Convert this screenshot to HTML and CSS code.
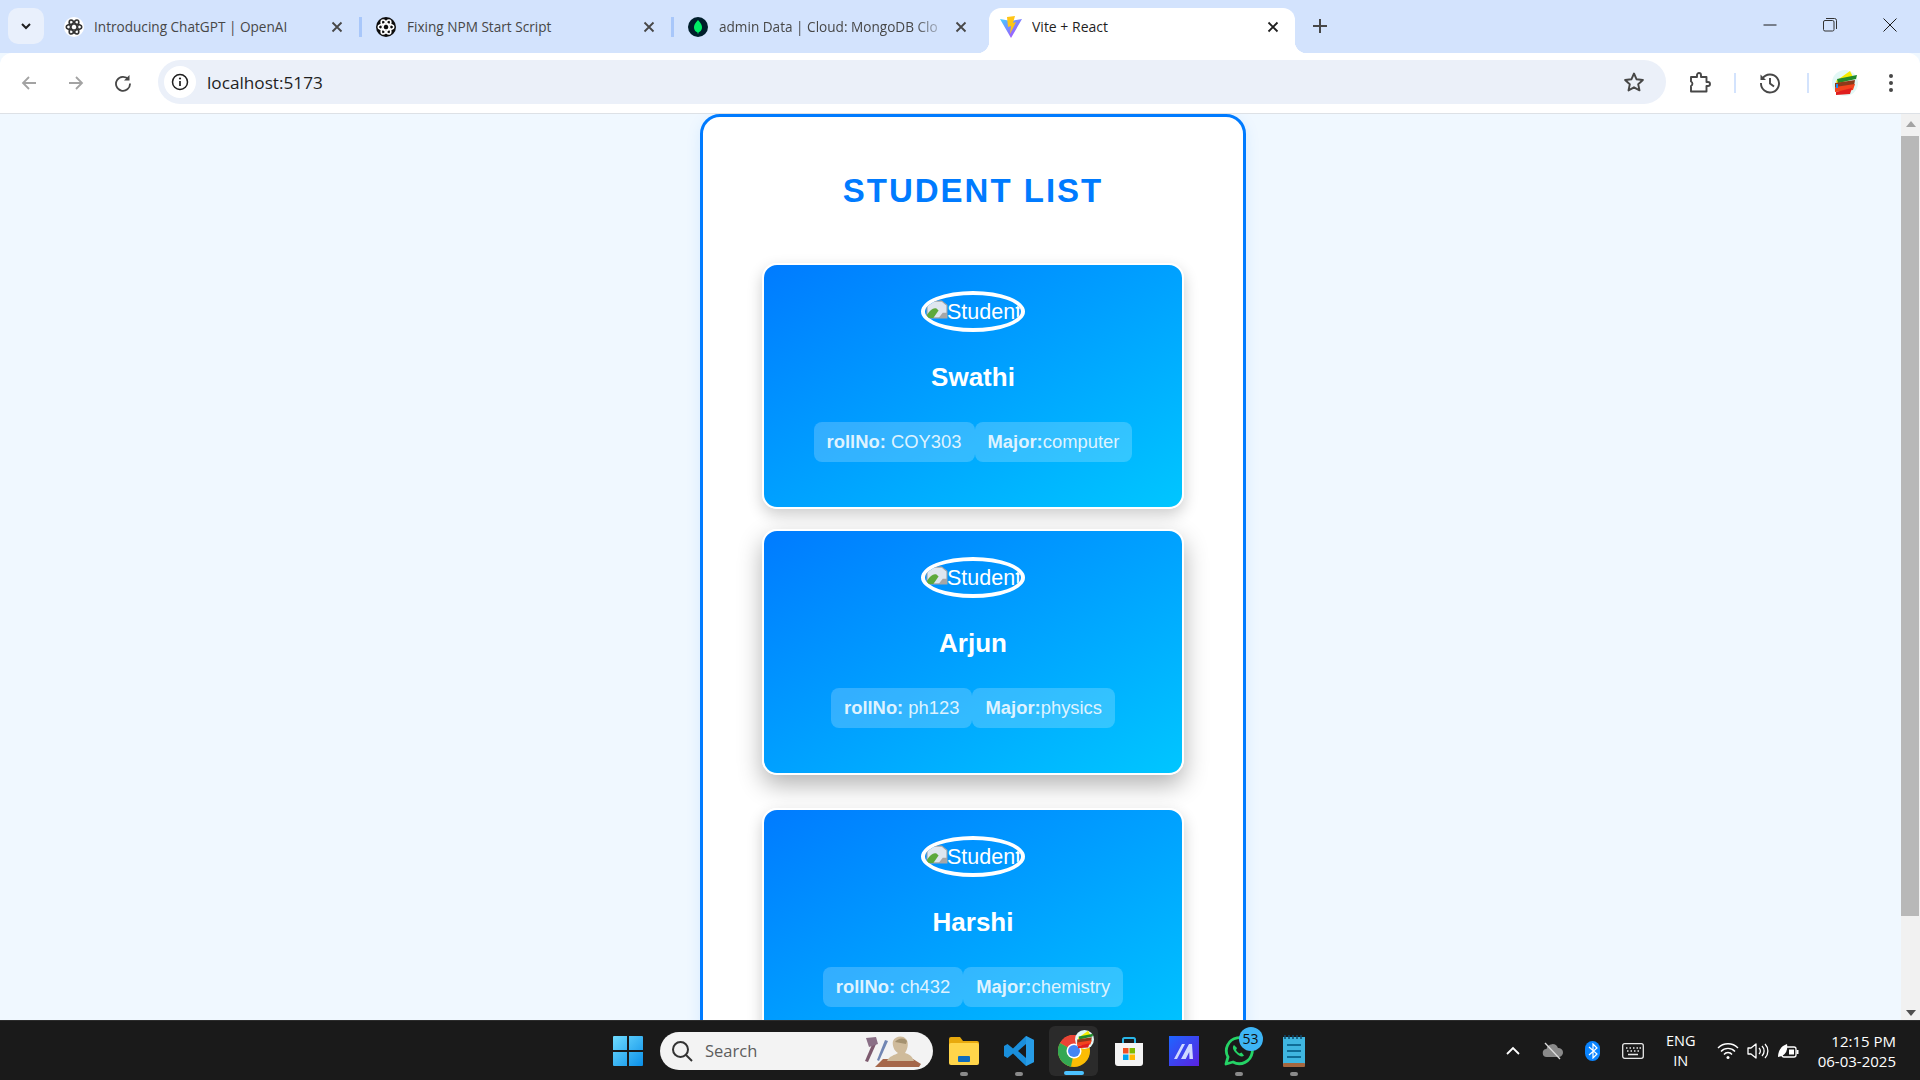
FILE: index.html
```html
<!DOCTYPE html>
<html lang="en">
<head>
    <meta charset="UTF-8">
    <meta name="viewport" content="width=device-width, initial-scale=1.0">
    <title>Vite + React</title>
    <link rel="stylesheet" href="styles.css">
</head>
<body>
    <div class="tabstrip">
        <div class="tab-menu">
            <svg width="14" height="14" viewBox="0 0 14 14"><path d="M3 5l4 4 4-4" fill="none" stroke="#1f1f1f" stroke-width="2"/></svg>
        </div>
        <div class="tab has-sep">
            <svg class="favicon" viewBox="0 0 20 20"><circle cx="10" cy="10" r="10" fill="#fff"/><g fill="none" stroke="#333" stroke-width="1.500"><ellipse cx="10" cy="10" rx="7.800" ry="3"/><ellipse cx="10" cy="10" rx="7.800" ry="3" transform="rotate(60 10 10)"/><ellipse cx="10" cy="10" rx="7.800" ry="3" transform="rotate(120 10 10)"/></g></svg>
            <span class="tab-title">Introducing ChatGPT | OpenAI</span>
            <svg class="tab-close" viewBox="0 0 12 12"><path d="M1.500 1.500l9 9M10.500 1.500l-9 9" stroke="#474747" stroke-width="1.800"/></svg>
        </div>
        <div class="tab has-sep">
            <svg class="favicon" viewBox="0 0 20 20"><circle cx="10" cy="10" r="10" fill="#0d0d0d"/><g fill="none" stroke="#fff" stroke-width="1.500"><ellipse cx="10" cy="10" rx="7.800" ry="3"/><ellipse cx="10" cy="10" rx="7.800" ry="3" transform="rotate(60 10 10)"/><ellipse cx="10" cy="10" rx="7.800" ry="3" transform="rotate(120 10 10)"/></g></svg>
            <span class="tab-title">Fixing NPM Start Script</span>
            <svg class="tab-close" viewBox="0 0 12 12"><path d="M1.500 1.500l9 9M10.500 1.500l-9 9" stroke="#474747" stroke-width="1.800"/></svg>
        </div>
        <div class="tab">
            <svg class="favicon" viewBox="0 0 20 20"><circle cx="10" cy="10" r="10" fill="#001e2b"/><path d="M10 3c3 3 4.200 5.500 4 8-.2 2.400-2 3.800-3.500 4.500L10 17.500l-.5-2C8 14.800 6.200 13.400 6 11c-.2-2.500 1-5 4-8z" fill="#00ed64"/></svg>
            <span class="tab-title tab-title-fade">admin Data | Cloud: MongoDB Clo</span>
            <svg class="tab-close" viewBox="0 0 12 12"><path d="M1.500 1.500l9 9M10.500 1.500l-9 9" stroke="#474747" stroke-width="1.800"/></svg>
        </div>
        <div class="tab active">
            <svg class="favicon" viewBox="0 0 22 22"><path d="M0 3l11 19L22 3l-6 1-5 1z" fill="url(#viteFill)"/><path d="M7 1l8-1-2 7 3-1-6 12 1-8-3 1z" fill="#ffc517"/><defs><linearGradient id="viteFill" x1="0" y1="0" x2="1" y2="1"><stop offset="0" stop-color="#41d1ff"/><stop offset="1" stop-color="#bd34fe"/></linearGradient></defs></svg>
            <span class="tab-title">Vite + React</span>
            <svg class="tab-close" viewBox="0 0 12 12"><path d="M1.500 1.500l9 9M10.500 1.500l-9 9" stroke="#1f1f1f" stroke-width="1.800"/></svg>
        </div>
        <div class="new-tab">
            <svg width="16" height="16" viewBox="0 0 16 16"><path d="M8 1v14M1 8h14" stroke="#474747" stroke-width="2"/></svg>
        </div>
        <div class="window-controls">
            <div class="win-btn"><svg width="14" height="14" viewBox="0 0 14 14"><path d="M0.500 7h13" stroke="#1a1a1a" stroke-width="1"/></svg></div>
            <div class="win-btn"><svg width="14" height="14" viewBox="0 0 14 14"><rect x="0.500" y="2.500" width="10.500" height="10.500" rx="1.500" fill="none" stroke="#333" stroke-width="1"/><path d="M3 .5h8.500a2 2 0 0 1 2 2V11" fill="none" stroke="#333" stroke-width="1"/></svg></div>
            <div class="win-btn"><svg width="14" height="14" viewBox="0 0 14 14"><path d="M.5.5l13 13M13.500.5l-13 13" stroke="#1a1a1a" stroke-width="1"/></svg></div>
        </div>
    </div>

    <div class="toolbar">
        <div class="nav-btn"><svg width="18" height="18" viewBox="0 0 18 18"><path d="M16 9H3M9 3L3 9l6 6" fill="none" stroke="#a3a3a3" stroke-width="1.800"/></svg></div>
        <div class="nav-btn"><svg width="18" height="18" viewBox="0 0 18 18"><path d="M2 9h13M9 3l6 6-6 6" fill="none" stroke="#a3a3a3" stroke-width="1.800"/></svg></div>
        <div class="nav-btn"><svg width="18" height="18" viewBox="0 0 18 18"><path d="M14.500 5.500A7 7 0 1 0 16 9.500" fill="none" stroke="#474747" stroke-width="1.800"/><path d="M15.500 1v5.500H10z" fill="#474747"/></svg></div>
        <div class="omnibox">
            <div class="site-info">
                <svg width="18" height="18" viewBox="0 0 18 18"><circle cx="9" cy="9" r="7.500" fill="none" stroke="#1f1f1f" stroke-width="1.500"/><path d="M9 8v5" stroke="#1f1f1f" stroke-width="1.700"/><circle cx="9" cy="5.500" r="1.100" fill="#1f1f1f"/></svg>
            </div>
            <span class="url">localhost:5173</span>
            <svg class="star" width="22" height="22" viewBox="0 0 22 22"><path d="M11 2.500l2.600 5.800 6.300.7-4.700 4.200 1.300 6.200L11 16.300l-5.500 3.100 1.300-6.200L2.100 9l6.300-.7z" fill="none" stroke="#474747" stroke-width="1.900" stroke-linejoin="round"/></svg>
        </div>
        <div class="tool-btn">
            <svg width="22" height="22" viewBox="0 0 22 22"><path d="M2 5.500h6V3.500a2 2 0 0 1 4 0v2h5.500v5h1.500a2 2 0 0 1 0 4h-1.500v5.500H2v-5.500a2.500 2.500 0 0 0 0-4.500z" transform="translate(0 -.5)" fill="none" stroke="#474747" stroke-width="1.900" stroke-linejoin="round"/></svg>
        </div>
        <span class="tool-sep"></span>
        <div class="tool-btn">
            <svg width="22" height="22" viewBox="0 0 22 22"><path d="M3.500 6.500A9 9 0 1 1 2 11" fill="none" stroke="#474747" stroke-width="1.900"/><path d="M1.500 2.500v5.500H7z" fill="#474747"/><path d="M11 6v5.500l4 3" fill="none" stroke="#474747" stroke-width="1.900"/></svg>
        </div>
        <span class="tool-sep tool-sep-second"></span>
        <div class="profile-btn">
            <svg width="26" height="26" viewBox="0 0 26 26"><circle cx="13" cy="13" r="13" fill="#e3f8f6"/><path d="M4 11L18 1l3 6-15 8z" fill="#f5ec00"/><path d="M5 9l20-4-1 4L6 13z" fill="#218a2c"/><path d="M3 13l20-3-1 6-19 3z" fill="#8b3a1a"/><path d="M3 17l20-3-2 6-18 2z" fill="#f2441d"/><path d="M4 22l16-4-2 6-14 1z" fill="#e01e1e"/><rect x="4" y="14" width="2" height="4" fill="#1e8cf0"/></svg>
        </div>
        <div class="menu-btn">
            <svg width="6" height="20" viewBox="0 0 6 20"><circle cx="3" cy="3" r="2" fill="#474747"/><circle cx="3" cy="10" r="2" fill="#474747"/><circle cx="3" cy="17" r="2" fill="#474747"/></svg>
        </div>
    </div>

    <div class="viewport">
        <div class="page">
            <div class="container">
                <h1>STUDENT LIST</h1>

                <div class="student-card">
                    <div class="avatar">
                        <svg class="broken-img" width="22" height="19" viewBox="0 0 21 18"><path d="M1 1h14l5 4v12H1z" fill="#dfe6ef" stroke="#a6a6a6"/><path d="M1 14c3-5 6-7 9-6l2 2-5 7H1z" fill="#5da93c"/><path d="M20 12v5h-8l4-5z" fill="#a6a6a6"/></svg>
                        <span class="alt-text">Student</span>
                    </div>
                    <h2>Swathi</h2>
                    <div class="pills">
                        <div class="pill"><strong>rollNo:</strong> COY303</div>
                        <div class="pill"><strong>Major:</strong>computer</div>
                    </div>
                </div>

                <div class="student-card raised">
                    <div class="avatar">
                        <svg class="broken-img" width="22" height="19" viewBox="0 0 21 18"><path d="M1 1h14l5 4v12H1z" fill="#dfe6ef" stroke="#a6a6a6"/><path d="M1 14c3-5 6-7 9-6l2 2-5 7H1z" fill="#5da93c"/><path d="M20 12v5h-8l4-5z" fill="#a6a6a6"/></svg>
                        <span class="alt-text">Student</span>
                    </div>
                    <h2>Arjun</h2>
                    <div class="pills">
                        <div class="pill"><strong>rollNo:</strong> ph123</div>
                        <div class="pill"><strong>Major:</strong>physics</div>
                    </div>
                </div>

                <div class="student-card">
                    <div class="avatar">
                        <svg class="broken-img" width="22" height="19" viewBox="0 0 21 18"><path d="M1 1h14l5 4v12H1z" fill="#dfe6ef" stroke="#a6a6a6"/><path d="M1 14c3-5 6-7 9-6l2 2-5 7H1z" fill="#5da93c"/><path d="M20 12v5h-8l4-5z" fill="#a6a6a6"/></svg>
                        <span class="alt-text">Student</span>
                    </div>
                    <h2>Harshi</h2>
                    <div class="pills">
                        <div class="pill"><strong>rollNo:</strong> ch432</div>
                        <div class="pill"><strong>Major:</strong>chemistry</div>
                    </div>
                </div>
            </div>
        </div>
        <div class="scrollbar">
            <svg class="scroll-arrow" width="12" height="8" viewBox="0 0 12 8"><path d="M6 1l5 6H1z" fill="#a3a3a3"/></svg>
            <div class="scroll-thumb"></div>
            <svg class="scroll-arrow" width="12" height="8" viewBox="0 0 12 8"><path d="M6 7L1 1h10z" fill="#505050"/></svg>
        </div>
    </div>

    <div class="taskbar">
        <div class="task-app start">
            <svg width="30" height="30" viewBox="0 0 30 30"><defs><linearGradient id="winBlue" x1="0" y1="0" x2="1" y2="1"><stop offset="0" stop-color="#6fdcff"/><stop offset="1" stop-color="#0a8fe8"/></linearGradient></defs><path d="M0 1a1 1 0 0 1 1-1h13v14H0zM16 0h13a1 1 0 0 1 1 1v13H16zM0 16h14v14H1a1 1 0 0 1-1-1zM16 16h14v13a1 1 0 0 1-1 1H16z" fill="url(#winBlue)"/></svg>
        </div>
        <div class="search">
            <svg width="24" height="24" viewBox="0 0 24 24"><circle cx="10.500" cy="10.500" r="7.500" fill="none" stroke="#333" stroke-width="2"/><path d="M16 16l6 6" stroke="#333" stroke-width="2"/></svg>
            <span class="search-label">Search</span>
            <svg class="search-art" width="62" height="34" viewBox="0 0 62 34"><path d="M13 6l3 2-9 20-3-1z" fill="#7d5a6e"/><path d="M5 4l10-1 2 7-9 3z" fill="#8a6f86"/><path d="M24 6l3 1-9 20-2-1z" fill="#7186b3"/><path d="M14 33l8-8h30l8 5-2 3z" fill="#a5674a"/><path d="M26 27c2-5 8-6 11-8-4-2-6-8-5-12 2-5 10-6 13-2 3 3 2 10-1 14 4 1 7 3 9 8z" fill="#cfbb9b"/><path d="M34 8c3-4 9-5 12-1l-1 3c-4-1-7-1-11-2z" fill="#a4916f"/></svg>
        </div>
        <div class="task-app dot">
            <svg width="30" height="28" viewBox="0 0 30 28"><path d="M0 2a2 2 0 0 1 2-2h9l3 4h14a2 2 0 0 1 2 2v3H0z" fill="#e8a90d"/><rect y="6" width="30" height="22" rx="2" fill="#ffd54a"/><rect x="9" y="19" width="12" height="6" rx="1" fill="#0f6cbd"/></svg>
        </div>
        <div class="task-app dot">
            <svg width="30" height="30" viewBox="0 0 30 30"><path d="M22 0l8 4v22l-8 4L9 17.500 3.500 22 0 20V10l3.500-2L9 12.500zM22 8l-8 7 8 7z" fill="#1a8fdc"/><path d="M22 0l8 4v22l-8 4z" fill="#2a9fe8" opacity="0.8"/></svg>
        </div>
        <div class="task-app chrome-app">
            <span class="chrome-logo">
                <svg width="32" height="32" viewBox="0 0 32 32"><circle cx="16" cy="16" r="16" fill="#fbbc04"/><path d="M16 16L2 8a16 16 0 0 1 28 0z" fill="#ea4335"/><path d="M16 16L2 8a16 16 0 0 0 11 23.700z" fill="#34a853"/><circle cx="16" cy="16" r="7.500" fill="#fff"/><circle cx="16" cy="16" r="6" fill="#4285f4"/></svg>
                <svg class="chrome-badge" width="19" height="19" viewBox="0 0 26 26"><circle cx="13" cy="13" r="13" fill="#e3f8f6"/><path d="M4 11L18 1l3 6-15 8z" fill="#f5ec00"/><path d="M5 9l20-4-1 4L6 13z" fill="#218a2c"/><path d="M3 13l20-3-1 6-19 3z" fill="#8b3a1a"/><path d="M3 17l20-3-2 6-18 2z" fill="#f2441d"/><path d="M4 22l16-4-2 6-14 1z" fill="#e01e1e"/></svg>
            </span>
        </div>
        <div class="task-app">
            <svg width="30" height="30" viewBox="0 0 30 30"><path d="M9 7V3.500A1.500 1.500 0 0 1 10.500 2h9A1.500 1.500 0 0 1 21 3.500V7" fill="none" stroke="#29b6e8" stroke-width="2"/><path d="M1 7h28v20a3 3 0 0 1-3 3H4a3 3 0 0 1-3-3z" fill="#f4f4f4"/><rect x="9" y="12" width="5.500" height="5.500" fill="#f25022"/><rect x="15.500" y="12" width="5.500" height="5.500" fill="#7fba00"/><rect x="9" y="18.500" width="5.500" height="5.500" fill="#00a4ef"/><rect x="15.500" y="18.500" width="5.500" height="5.500" fill="#ffb900"/></svg>
        </div>
        <div class="task-app">
            <svg width="30" height="30" viewBox="0 0 30 30"><defs><linearGradient id="appBlue" x1="0" y1="0" x2="1" y2="1"><stop offset="0" stop-color="#1e66ff"/><stop offset="1" stop-color="#5a22e0"/></linearGradient></defs><rect width="30" height="30" fill="url(#appBlue)"/><path d="M5 23l8-15h3L8 23zM12 23l8-15h3l1 15h-3.500l-.3-7-3.500 7z" fill="#cfd8ff"/></svg>
        </div>
        <div class="task-app dot">
            <span class="whats-logo">
                <svg width="30" height="30" viewBox="0 0 30 30"><path d="M2 28l2-7A13 13 0 1 1 9 26z" fill="none" stroke="#25d366" stroke-width="2.800" stroke-linejoin="round"/><path d="M10 9c-2 2-1 5 2 8s6 4.500 8 2.500l-2.500-3-2 1c-1.500-.8-2.700-2-3.500-3.500l1-2z" fill="#25d366"/></svg>
                <span class="badge">53</span>
            </span>
        </div>
        <div class="task-app dot">
            <svg width="22" height="32" viewBox="0 0 22 32"><rect y="2" width="22" height="28" fill="#3fb6e0"/><rect y="28" width="22" height="4" rx="1" fill="#a5673f"/><path d="M2 0v4M6 0v4M10 0v4M14 0v4M18 0v4" stroke="#0f4a6b" stroke-width="1.500"/><path d="M4 10h14M4 16h14M4 22h14" stroke="#0f6d96" stroke-width="2"/></svg>
        </div>

        <div class="tray">
            <div class="tray-icon"><svg width="14" height="9" viewBox="0 0 14 9"><path d="M1 8l6-6 6 6" fill="none" stroke="#fff" stroke-width="1.800"/></svg></div>
            <div class="tray-icon"><svg width="22" height="18" viewBox="0 0 22 18"><path d="M5 15a4 4 0 0 1-.5-8 6 6 0 0 1 11.500-1 4.500 4.500 0 0 1 1 9z" fill="#8a8a8a"/><path d="M3 1l15 16" stroke="#ddd" stroke-width="1.300"/></svg></div>
            <div class="tray-icon"><span class="bt-pill"><svg width="10" height="16" viewBox="0 0 10 16"><path d="M1 4l8 7-4 4V1l4 4-8 7" fill="none" stroke="#fff" stroke-width="1.200"/></svg></span></div>
            <div class="tray-icon"><svg width="22" height="16" viewBox="0 0 22 16"><rect x=".7" y=".7" width="20.600" height="14.600" rx="2" fill="none" stroke="#e8e8e8" stroke-width="1.300"/><path d="M4 5h1.500M7.500 5H9M11 5h1.500M14.500 5H16M17.500 5H19M5 8h1.500M8.500 8H10M12 8h1.500M15.500 8H17M6 11.500h10" stroke="#e8e8e8" stroke-width="1.300"/></svg></div>
            <div class="lang">ENG<br>IN</div>
            <div class="tray-icon narrow"><svg width="22" height="18" viewBox="0 0 22 18"><path d="M1 6a14 14 0 0 1 20 0M4 9.500a9.500 9.500 0 0 1 14 0M7 12.500a5 5 0 0 1 8 0" fill="none" stroke="#fff" stroke-width="1.400"/><circle cx="11" cy="15.500" r="1.500" fill="#fff"/></svg></div>
            <div class="tray-icon narrow"><svg width="22" height="18" viewBox="0 0 22 18"><path d="M1 6h3l5-4v14l-5-4H1z" fill="none" stroke="#fff" stroke-width="1.300" stroke-linejoin="round"/><path d="M12 6a4 4 0 0 1 0 6M15 4a7 7 0 0 1 0 10M18 2a10 10 0 0 1 0 14" fill="none" stroke="#fff" stroke-width="1.300"/></svg></div>
            <div class="tray-icon narrow"><svg width="22" height="18" viewBox="0 0 22 18"><rect x="5" y="5" width="14" height="10" rx="2" fill="none" stroke="#fff" stroke-width="1.300"/><rect x="19.500" y="8" width="2" height="4" fill="#fff"/><path d="M1 15c0-6 3-11 9-13 1 5-1 10-5 12z" fill="#fff"/><rect x="12" y="7.500" width="5" height="5" fill="#fff"/></svg></div>
            <div class="clock"><span>12:15 PM</span><span>06-03-2025</span></div>
        </div>
    </div>
</body>
</html>
```

FILE: styles.css
```css
* {
 box-sizing: border-box;
}

html, body {
 margin: 0;
 height: 100%;
 overflow: hidden;
}

body {
 display: flex;
 flex-direction: column;
 height: 1080px;
 font-family: "Liberation Sans", Arial, sans-serif;
 background-color: #f0f8ff;
}

/* browser tabs */
.tabstrip {
 display: flex;
 flex: none;
 height: 53px;
 background-color: #d3e3fd;
}

.tab-menu {
 display: flex;
 flex: none;
 align-items: center;
 justify-content: center;
 width: 36px;
 height: 36px;
 margin: 8px 6px 0 8px;
 border-radius: 10px;
 background-color: #e9f0fc;
}

.tab {
 position: relative;
 display: flex;
 flex: none;
 align-items: center;
 width: 312px;
 height: 45px;
 margin-top: 8px;
 padding: 0 19px 8px 14px;
 font-family: "Open Sans", sans-serif;
 font-size: 13.6px;
 color: #474747;
}

.has-sep::after {
 content: "";
 position: absolute;
 top: 9px;
 right: 0;
 width: 3px;
 height: 20px;
 background-color: #a8c7fa;
}

.tab.active {
 width: 306px;
 margin: 8px 3px 0;
 padding: 0 16px 8px 11px;
 border-radius: 12px 12px 0 0;
 background-color: #fff;
 font-size: 14px;
 color: #1f1f1f;
}

/* little curved feet on the active tab */
.tab.active::before,
.tab.active::after {
 content: "";
 position: absolute;
 bottom: 0;
 width: 12px;
 height: 12px;
}

.tab.active::before {
 left: -12px;
 background: radial-gradient(circle at 0 0, transparent 12px, #fff 12.5px);
}

.tab.active::after {
 right: -12px;
 background: radial-gradient(circle at 100% 0, transparent 12px, #fff 12.5px);
}

.favicon {
 flex: none;
 width: 20px;
 height: 20px;
 margin-right: 10px;
}

.has-sep + .tab .favicon {
 margin-right: 11px;
}

.tab.active .favicon {
 width: 22px;
 height: 22px;
 margin-right: 10px;
}

.tab-title {
 flex: 1;
 overflow: hidden;
 white-space: nowrap;
}

.tab-title-fade {
 margin-right: 6px;
 -webkit-mask-image: linear-gradient(to right, #000 85%, transparent 100%);
 mask-image: linear-gradient(to right, #000 85%, transparent 100%);
}

.tab-close {
 flex: none;
 width: 12px;
 height: 12px;
}

.new-tab {
 display: flex;
 flex: none;
 align-items: center;
 justify-content: center;
 width: 32px;
 height: 32px;
 margin: 10px 0 0 6px;
}

.window-controls {
 display: flex;
 margin-left: auto;
}

.win-btn {
 display: flex;
 align-items: center;
 justify-content: center;
 width: 60px;
 height: 50px;
}

/* address bar row */
.toolbar {
 display: flex;
 flex: none;
 align-items: center;
 height: 61px;
 padding-left: 5px;
 padding-right: 19px;
 border-bottom: 1px solid #dde1e6;
 border-radius: 12px 12px 0 0;
 background-color: #fff;
}

.nav-btn {
 display: flex;
 flex: none;
 align-items: center;
 justify-content: center;
 width: 47px;
}

.omnibox {
 display: flex;
 flex: 1;
 align-items: center;
 height: 44px;
 margin-left: 12px;
 margin-bottom: 2px;
 padding-left: 6px;
 padding-right: 21px;
 border-radius: 22px;
 background-color: #ebf0f9;
}

.site-info {
 display: flex;
 align-items: center;
 justify-content: center;
 width: 32px;
 height: 32px;
 margin-right: 11px;
 border-radius: 50%;
 background-color: #fff;
}

.url {
 flex: 1;
 font-family: "Open Sans", sans-serif;
 font-size: 17.2px;
 color: #1f1f1f;
}

.tool-btn {
 display: flex;
 flex: none;
 align-items: center;
 justify-content: center;
 width: 68px;
}

.tool-sep {
 flex: none;
 width: 2px;
 height: 20px;
 background-color: #d3e3fd;
}

.tool-sep-second {
 margin-left: 3px;
}

.profile-btn {
 display: flex;
 flex: none;
 align-items: center;
 justify-content: center;
 width: 72px;
}

.menu-btn {
 display: flex;
 flex: none;
 align-items: center;
 justify-content: center;
 width: 20px;
}

/* the page itself */
.viewport {
 display: flex;
 flex: 1;
 min-height: 0;
}

.page {
 flex: 1;
 min-width: 0;
 overflow: hidden;
 padding-left: 700px;
}

.container {
 width: 546px;
 padding: 54px 59px 40px;
 border: 3px solid #007bff;
 border-radius: 20px;
 background-color: #fff;
 box-shadow: 0 4px 15px rgba(0, 123, 255, 0.1);
}

.container h1 {
 margin: 0 0 52px;
 font-size: 33px;
 line-height: 40px;
 letter-spacing: 2px;
 text-align: center;
 color: #007bff;
}

.student-card {
 margin-bottom: 20px;
 padding: 26px 10px 45px;
 border: 2px solid #fff;
 border-radius: 15px;
 background: linear-gradient(to bottom right, #007bff, #00c6ff);
 box-shadow: 0 6px 15px rgba(0, 0, 0, 0.2);
 text-align: center;
 color: #fff;
}

.student-card.raised {
 margin-bottom: 33px;
 box-shadow: 0 10px 25px rgba(0, 0, 0, 0.3);
}

.avatar {
 display: flex;
 align-items: center;
 width: 104px;
 height: 41px;
 margin: 0 auto;
 overflow: hidden;
 border: 4px solid #fff;
 border-radius: 50%;
}

.broken-img {
 flex: none;
 margin: -4px -1px 0 1px;
}

.alt-text {
 flex: none;
 font-size: 21.5px;
 line-height: 24px;
}

.student-card h2 {
 margin: 29px 0 0;
 font-size: 26px;
 line-height: 32px;
}

.pills {
 display: flex;
 justify-content: center;
 margin-top: 29px;
}

.pill {
 padding: 10px 13px;
 border-radius: 8px;
 background-color: rgba(255, 255, 255, 0.2);
 font-size: 18.4px;
 line-height: 20px;
 color: #dff3ff;
}

/* fake scrollbar, the page is longer than the window */
.scrollbar {
 display: flex;
 flex: none;
 flex-direction: column;
 align-items: center;
 justify-content: space-between;
 width: 19px;
 padding: 6px 0 3px;
 background-color: #f1f1f1;
}

.scroll-arrow {
 flex: none;
}

.scroll-thumb {
 flex: none;
 width: 18px;
 height: 780px;
 margin-top: -2px;
 margin-bottom: 84px;
 margin-right: 1px;
 background-color: #b8b8b8;
}

/* windows taskbar */
.taskbar {
 display: flex;
 flex: none;
 align-items: center;
 height: 60px;
 padding-left: 600px;
 border-top: 1px solid #2c2c2c;
 background-color: #1a1a1a;
}

.task-app {
 position: relative;
 display: flex;
 flex: none;
 align-items: center;
 justify-content: center;
 width: 55px;
 height: 50px;
}

.task-app.dot::after {
 content: "";
 position: absolute;
 bottom: 0;
 left: 50%;
 width: 8px;
 height: 4px;
 margin-left: -4px;
 border-radius: 2px;
 background-color: #8a8a8a;
}

.start {
 margin-right: 5px;
}

.search {
 display: flex;
 flex: none;
 align-items: center;
 width: 273px;
 height: 38px;
 margin-right: 3px;
 padding: 0 10px 0 10px;
 border-radius: 19px;
 background-color: #f3f3f3;
}

.search-label {
 margin-left: 11px;
 font-family: "Open Sans", sans-serif;
 font-size: 16.5px;
 color: #5d5d5d;
}

.search-art {
 margin-left: auto;
}

.chrome-app {
 width: 49px;
 margin: 0 3px;
 border-radius: 6px;
 background-color: #2b2b2b;
}

.chrome-app::after {
 content: "";
 position: absolute;
 bottom: 1px;
 left: 50%;
 width: 20px;
 height: 4px;
 margin-left: -10px;
 border-radius: 2px;
 background-color: #4cc2ff;
}

.chrome-logo,
.whats-logo {
 position: relative;
 display: flex;
}

.chrome-badge {
 position: absolute;
 top: -5px;
 right: -4px;
}

.badge {
 position: absolute;
 top: -9px;
 right: -9px;
 width: 24px;
 height: 24px;
 border-radius: 50%;
 background-color: #3eb5f5;
 font-family: "Open Sans", sans-serif;
 font-size: 14px;
 line-height: 24px;
 text-align: center;
 color: #111;
}

.tray {
 display: flex;
 align-items: center;
 margin-left: auto;
 padding-right: 24px;
 color: #fff;
 font-family: "Open Sans", sans-serif;
}

.tray-icon {
 display: flex;
 flex: none;
 align-items: center;
 justify-content: center;
 width: 40px;
}

.tray-icon.narrow {
 width: 30px;
}

.bt-pill {
 display: flex;
 align-items: center;
 justify-content: center;
 width: 15px;
 height: 20px;
 border-radius: 8px;
 background-color: #0a84ff;
}

.lang {
 width: 56px;
 margin-right: 4px;
 margin-left: 0;
 font-size: 14.5px;
 line-height: 20px;
 text-align: center;
}

.clock {
 display: flex;
 flex-direction: column;
 align-items: flex-end;
 margin-left: 15px;
 font-size: 15px;
 line-height: 20px;
}
```
